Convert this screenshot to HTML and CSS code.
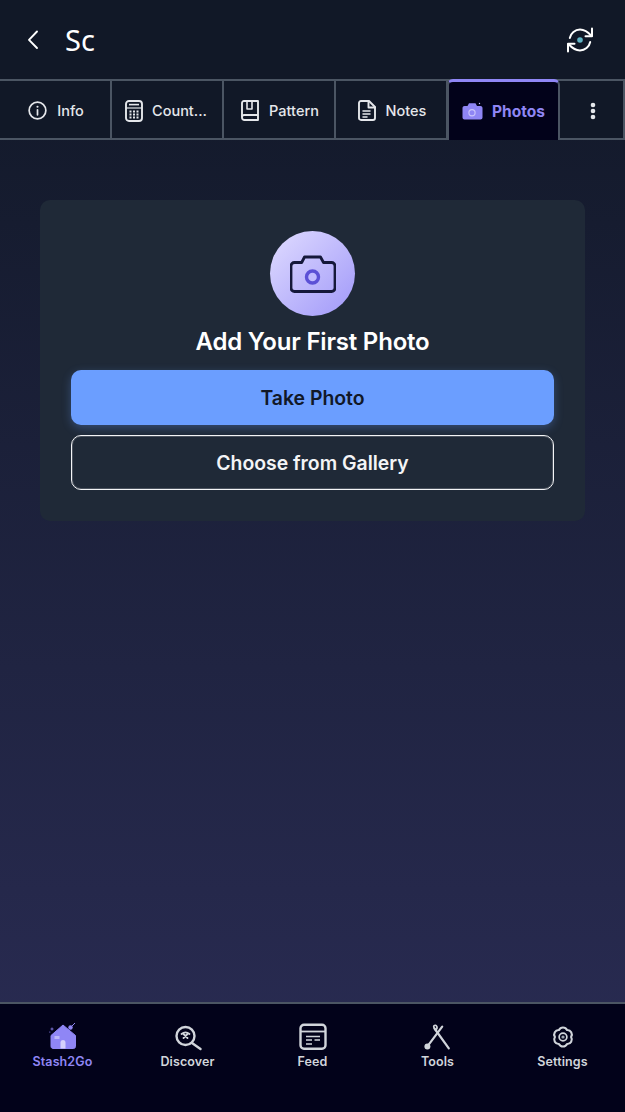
FILE: index.html
```html
<!DOCTYPE html>
<html lang="en">
<head>
    <meta charset="UTF-8">
    <meta name="viewport" content="width=device-width, initial-scale=1.0">
    <title>Sc</title>
    <link rel="stylesheet" href="styles.css">
</head>
<body>
    <div class="app">
        <!-- Top bar -->
        <header class="topbar">
            <button class="icon-btn back-btn">
                <svg width="14" height="20" viewBox="0 0 14 20" fill="none" stroke="#fff" stroke-width="1.9" stroke-linecap="round" stroke-linejoin="round"><path d="M11 1.5 L3 9.8 L11 18"/></svg>
            </button>
            <h1 class="title">Sc</h1>
            <button class="icon-btn sync-btn">
                <svg width="28" height="28" viewBox="0 0 28 28" fill="none" stroke="#fff" stroke-width="2" stroke-linecap="round" stroke-linejoin="round">
                    <path d="M3.8 12 A10.4 10.4 0 0 1 14 3.6 C18.5 3.6 22 6 25.5 10"/>
                    <path d="M26 2.5 V10.2 H19.5"/>
                    <path d="M24.2 16 A10.4 10.4 0 0 1 14 24.4 C9.5 24.4 6 22 2.5 18"/>
                    <path d="M2 25.5 V17.8 H8.5"/>
                    <circle cx="14" cy="14" r="2.8" fill="#62b5c6" stroke="none"/>
                </svg>
            </button>
        </header>

        <!-- Tabs -->
        <nav class="tabs">
            <div class="tab">
                <svg width="19" height="19" viewBox="0 0 20 20" fill="none" stroke="#e5e7eb" stroke-width="1.8" stroke-linecap="round"><circle cx="10" cy="10" r="8.8"/><path d="M10 9.2 V14.5"/><circle cx="10" cy="6" r="1.1" fill="#e5e7eb" stroke="none"/></svg>
                <span>Info</span>
            </div>
            <div class="tab tab-count">
                <svg width="18" height="22" viewBox="0 0 18 22" fill="none" stroke="#e5e7eb" stroke-width="1.9"><rect x="1" y="1" width="16" height="20" rx="3"/><path d="M1 8 H17" stroke-width="1.2"/><path d="M4 4.6 H14" stroke-width="1.6"/><path d="M4.5 11.5 H6.5 M8 11.5 H10 M11.5 11.5 H13.5 M4.5 14.5 H6.5 M8 14.5 H10 M11.5 14.5 H13.5 M4.5 17.5 H6.5 M8 17.5 H10 M11.5 17.5 H13.5" stroke-width="1.8"/></svg>
                <span>Count...</span>
            </div>
            <div class="tab">
                <svg width="18" height="21" viewBox="0 0 18 21" fill="none" stroke="#e5e7eb" stroke-width="1.9" stroke-linejoin="round"><path d="M3 1 H17 V20 H3.5 C2 20 1 19 1 17.5 V3 C1 1.8 1.8 1 3 1 Z"/><path d="M1 17 C1 15.6 2 15 3.2 15 H17"/><path d="M6 1 V9 H11 V1" stroke-width="1.6"/></svg>
                <span>Pattern</span>
            </div>
            <div class="tab">
                <svg width="18" height="21" viewBox="0 0 18 21" fill="none" stroke="#e5e7eb" stroke-width="1.9" stroke-linecap="round" stroke-linejoin="round"><path d="M3 1 H11 L17 7 V18 C17 19.2 16.2 20 15 20 H3 C1.8 20 1 19.2 1 18 V3 C1 1.8 1.8 1 3 1 Z"/><path d="M10.5 1 V7.5 H17"/><path d="M5 11 H12 M5 14 H12 M5 17 H9" stroke-width="1.5"/></svg>
                <span>Notes</span>
            </div>
            <div class="tab tab-active">
                <svg width="21" height="18" viewBox="0 0 21 18"><path d="M2.5 4 H5.5 L7 1.2 H13.5 L15 4 H18.5 C19.6 4 20.5 4.9 20.5 6 V15.5 C20.5 16.6 19.6 17.5 18.5 17.5 H2.5 C1.4 17.5 .5 16.6 .5 15.5 V6 C.5 4.9 1.4 4 2.5 4 Z" fill="#8f86f5"/><circle cx="10" cy="10.8" r="3.1" fill="none" stroke="#c9c4fb" stroke-width="1.2"/><circle cx="17.5" cy="1.5" r=".7" fill="#c9c4fb"/></svg>
                <span>Photos</span>
            </div>
            <div class="tab tab-more">
                <svg width="6" height="18" viewBox="0 0 6 18" fill="#e5e7eb"><circle cx="3" cy="3" r="2.3"/><circle cx="3" cy="9" r="2.3"/><circle cx="3" cy="15" r="2.3"/></svg>
            </div>
        </nav>

        <!-- Empty state -->
        <main class="content">
            <section class="card">
                <div class="avatar">
                    <svg width="46" height="38" viewBox="0 0 46 38" fill="none" stroke="#15183a" stroke-width="2.8" stroke-linejoin="round">
                        <path d="M4.5 7.5 H11.7 L14.5 2 H30.5 L33.5 7.5 H41.5 C43.5 7.5 45 9 45 11 V33 C45 35 43.5 36.5 41.5 36.5 H4.5 C2.5 36.5 1 35 1 33 V11 C1 9 2.5 7.5 4.5 7.5 Z"/>
                        <circle cx="22.5" cy="22" r="6" fill="#c0baff" stroke="#5b50d6" stroke-width="3.4"/>
                    </svg>
                </div>
                <h2 class="card-title">Add Your First Photo</h2>
                <button class="btn btn-primary">Take Photo</button>
                <button class="btn btn-outline">Choose from Gallery</button>
            </section>
        </main>

        <!-- Bottom navigation -->
        <footer class="bottom-nav">
            <div class="nav-item nav-active">
                <svg width="28" height="28" viewBox="0 0 28 28">
                    <path d="M14 2 L26.5 12.5 V23.5 C26.5 24.6 25.6 25.5 24.5 25.5 H4 C2.9 25.5 2 24.6 2 23.5 V12.5 Z" fill="#8f86f5" stroke="#8f86f5" stroke-linejoin="round"/>
                    <path d="M11.5 25.5 V19.5 C11.5 16.2 16.5 16.2 16.5 19.5 V25.5 Z" fill="#d5d1fb"/>
                    <rect x="5.5" y="13" width="5" height="3" fill="#bdb7f9"/>
                    <circle cx="21.5" cy="4.5" r="2.2" fill="#8f86f5"/>
                    <path d="M23 3 L26 0" stroke="#8f86f5"/>
                    <path d="M3 4.5 V7.5 M1.5 6 H4.5" stroke="#8f86f5" stroke-width=".8"/>
                    <circle cx="0.8" cy="9" r=".6" fill="#8f86f5"/>
                </svg>
                <span>Stash2Go</span>
            </div>
            <div class="nav-item">
                <svg width="28" height="28" viewBox="0 0 28 28" fill="none" stroke="#d1d5db" stroke-width="2.4" stroke-linecap="round">
                    <circle cx="11.5" cy="13" r="9"/>
                    <path d="M18 20 L26.5 26"/>
                    <path d="M7.5 11 C10 9 13 9 15.5 11 M9.5 15 L13.5 11 M13.5 15 L9.5 11" stroke-width="1.8"/>
                </svg>
                <span>Discover</span>
            </div>
            <div class="nav-item">
                <svg width="28" height="28" viewBox="0 0 28 28" fill="none" stroke="#d1d5db" stroke-width="2.4">
                    <rect x="1.5" y="1.8" width="25" height="24" rx="3.5"/>
                    <path d="M1.5 8.5 H26.5" stroke-width="1.8"/>
                    <path d="M7 13.5 H21 M7 17 H13 M15.5 17 H21 M7 21 H13" stroke-width="1.5"/>
                </svg>
                <span>Feed</span>
            </div>
            <div class="nav-item">
                <svg width="28" height="28" viewBox="0 0 28 28" fill="none" stroke="#d1d5db" stroke-width="2.2" stroke-linecap="round">
                    <path d="M18.2 3.7 L3.2 23.7"/>
                    <path d="M10.5 5.5 L24.8 25.3"/>
                    <path d="M10.5 5.5 C8.5 3 11 1.2 12.5 3 C13.5 4.2 13 6 11.5 7.5" stroke-width="1.6"/>
                    <circle cx="3.4" cy="23.6" r="3" fill="#d1d5db" stroke="none"/>
                </svg>
                <span>Tools</span>
            </div>
            <div class="nav-item">
                <svg width="24" height="28" viewBox="0 -1 22 26" fill="none" stroke="#d1d5db" stroke-width="2" stroke-linejoin="round">
                    <path d="M7.25 5.5 A4.2 4.2 0 0 1 14.75 5.5 A4.2 4.2 0 0 1 18.5 12 A4.2 4.2 0 0 1 14.75 18.5 A4.2 4.2 0 0 1 7.25 18.5 A4.2 4.2 0 0 1 3.5 12 A4.2 4.2 0 0 1 7.25 5.5 Z"/>
                    <circle cx="11" cy="12" r="3.6" stroke-width="1.6"/>
                    <circle cx="11" cy="12" r="1.5" fill="#9ca3af" stroke="none"/>
                </svg>
                <span>Settings</span>
            </div>
        </footer>
    </div>
</body>
</html>
```

FILE: styles.css
```css
* {
    box-sizing: border-box;
}

html, body {
    margin: 0;
    padding: 0;
    height: 100%;
}

body {
    font-family: Inter, "Liberation Sans", sans-serif;
    color: #fff;
}

button {
    font-family: inherit;
    background: none;
    border: none;
    padding: 0;
    color: inherit;
}

.app {
    height: 1112px;
    display: flex;
    flex-direction: column;
    background: linear-gradient(180deg, #111827 0%, #2a2c54 100%);
}

/* Top bar */
.topbar {
    height: 79px;
    flex-shrink: 0;
    display: flex;
    align-items: center;
    padding: 0 31px 0 26px;
    background: #111827;
}

.icon-btn {
    display: flex;
    align-items: center;
    justify-content: center;
}

.title {
    margin: 0 0 0 25px;
    font-family: "Noto Sans", sans-serif;
    font-size: 29px;
    font-weight: 400;
    flex: 1;
}

/* Tabs */
.tabs {
    height: 61px;
    flex-shrink: 0;
    display: flex;
    background: #111827;
    border-top: 2px solid #4b5563;
    border-bottom: 2px solid #4b5563;
}

.tab {
    width: 112px;
    display: flex;
    align-items: center;
    justify-content: center;
    gap: 10px;
    padding: 2px 0 0 2px;
    font-size: 14.5px;
    font-weight: 500;
    color: #e5e7eb;
    border-right: 2px solid #4b5563;
}

.tab-count {
    padding-left: 0;
    padding-right: 2px;
    gap: 9px;
}

.tab-active {
    width: 113px;
    padding: 0;
    gap: 9px;
    font-size: 15.5px;
    color: #8f86f5;
    font-weight: 700;
    background: #02021a;
    border-left: 2px solid #4b5563;
    border-top: 3px solid #8f86f5;
    border-radius: 6px 6px 0 0;
    margin: -2px 0 -2px -1px;
}

.tab-more {
    width: 65px;
}

/* Card */
.content {
    flex: 1;
    padding: 60px 40px 0;
}

.card {
    height: 321px;
    background: #1f2937;
    border-radius: 10px;
    padding: 31px 31px 0;
    display: flex;
    flex-direction: column;
    align-items: center;
}

.avatar {
    width: 85px;
    height: 85px;
    border-radius: 50%;
    background: linear-gradient(135deg, #e0dcff 0%, #a098f9 100%);
    display: flex;
    align-items: center;
    justify-content: center;
}

.card-title {
    margin: 10px 0 12px;
    font-size: 24px;
    line-height: 32px;
    font-weight: 600;
    letter-spacing: -0.2px;
}

.btn {
    width: 100%;
    height: 55px;
    border-radius: 10px;
    font-size: 19.4px;
    font-weight: 600;
}

.btn-primary {
    background: #6b9eff;
    color: #111827;
    box-shadow: 0 3px 10px rgba(107, 158, 255, 0.3);
    margin-bottom: 10px;
}

.btn-outline {
    border: 1px solid #f3f4f6;
    box-shadow: inset 0 0 0 1px rgba(255, 255, 255, 0.2);
    color: #f3f4f6;
}

/* Bottom navigation */
.bottom-nav {
    height: 110px;
    flex-shrink: 0;
    display: grid;
    grid-template-columns: repeat(5, 1fr);
    background: #02021a;
    border-top: 2px solid #4b5563;
}

.nav-item {
    display: flex;
    flex-direction: column;
    align-items: center;
    padding-top: 19px;
    gap: 3px;
    font-size: 12.5px;
    font-weight: 600;
    letter-spacing: 0.1px;
    color: #d1d5db;
}

.nav-item svg {
    height: 28px;
}

.nav-active {
    color: #8f86f5;
}
```
